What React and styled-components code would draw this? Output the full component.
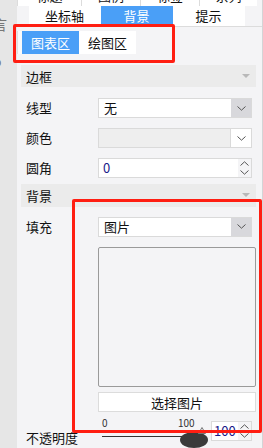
import React from 'react'
import styled, { createGlobalStyle } from 'styled-components'

const GlobalStyle = createGlobalStyle`
  html, body {
    margin: 0;
    padding: 0;
    background: #f4f4f6;
    font-family: "Noto Sans CJK SC", "Noto Sans", sans-serif;
    font-size: 13px;
    color: #111;
  }
`

const Page = styled.div`
  position: relative;
  display: flex;
  width: 263px;
  height: 448px;
  overflow: hidden;
`

const Strip = styled.div`
  width: 17px;
  flex: none;
  background: #e6e6e6;
  overflow: hidden;
  display: flex;
  flex-direction: column;
  padding-top: 15px;
  gap: 19px;
  color: #777;
  font-size: 14px;
`

const StripGlyph = styled.span`
  display: block;
  margin-left: -7px;
  line-height: 18px;
`

const Panel = styled.div`
  flex: 1;
  background: #f4f4f6;
  border-right: 1px solid #d4d4d6;
  display: flex;
  flex-direction: column;
`

const Edge = styled.div`
  width: 3px;
  flex: none;
  background: #f0f0f0;
`

const ClippedRow = styled.div`
  height: 6px;
  display: flex;
  align-items: flex-end;
  overflow: hidden;
  margin-right: 5px;
`

const TopTab = styled.div`
  height: 20px;
  flex: none;
  width: ${({ $w }) => $w}px;
  background: #fff;
  border-left: 1px solid #dcdcdc;
  display: flex;
  align-items: center;
  justify-content: center;
  font-size: 13px;
`

const TabRow = styled.div`
  height: 20px;
  display: flex;
  justify-content: center;
  border-bottom: 1px solid #dcdcdc;
  padding-right: 6px;
`

const Tab = styled.div`
  width: 72px;
  height: 20px;
  display: flex;
  align-items: center;
  justify-content: center;
  background: ${({ $active }) => ($active ? '#4a9ff7' : '#fff')};
  color: ${({ $active }) => ($active ? '#fff' : '#111')};
  font-size: 13px;
`

const SubTabs = styled.div`
  margin-top: 4px;
  align-self: flex-start;
  display: flex;
  background: #fafafa;
  border-left: 1px solid #e0e0e0;
  padding-left: 4px;
  height: 24px;
`

const SubTab = styled.div`
  width: 57px;
  display: flex;
  align-items: center;
  justify-content: center;
  background: ${({ $active }) => ($active ? '#4a9ff7' : '#fff')};
  color: ${({ $active }) => ($active ? '#fff' : '#111')};
  font-size: 13px;
`

const Section = styled.div`
  margin: ${({ $top }) => $top}px 6px 0 4px;
  height: 23px;
  background: #ebebeb;
  display: flex;
  align-items: center;
  justify-content: space-between;
  padding: 0 6px 0 5px;
  font-size: 13px;
`

const Caret = styled.span`
  width: 0;
  height: 0;
  border-left: 4px solid transparent;
  border-right: 4px solid transparent;
  border-top: 4px solid #b8b8b8;
`

const Row = styled.div`
  margin-top: ${({ $top }) => $top}px;
  display: flex;
  align-items: ${({ $align }) => $align || 'center'};
  padding-left: 9px;
`

const Label = styled.div`
  width: 72px;
  flex: none;
  font-size: 13px;
  line-height: 20px;
  margin-top: ${({ $top }) => $top || 0}px;
`

const Select = styled.div`
  width: 154px;
  height: 20px;
  box-sizing: border-box;
  border: 1px solid #dadada;
  background: ${({ $disabled }) => ($disabled ? '#eeeeee' : '#fff')};
  display: flex;
`

const SelectText = styled.div`
  flex: 1;
  padding-left: 5px;
  line-height: 18px;
  font-size: 13px;
`

const ArrowBox = styled.div`
  width: 20px;
  flex: none;
  display: flex;
  align-items: center;
  justify-content: center;
  background: ${({ $light }) => ($light ? '#fff' : '#d8d8dc')};
  border-left: ${({ $light }) => ($light ? '1px solid #dadada' : 'none')};
`

const SpinBox = styled.div`
  width: ${({ $w }) => $w}px;
  height: 20px;
  box-sizing: border-box;
  border: 1px solid #dadada;
  background: #fff;
  display: flex;
`

const SpinText = styled.div`
  flex: 1;
  padding-left: ${({ $pad }) => $pad ?? 4}px;
  line-height: 18px;
  font-size: 13px;
  color: #1a1a8a;
`

const SpinArrows = styled.div`
  width: 13px;
  flex: none;
  display: flex;
  flex-direction: column;
  align-items: center;
  justify-content: space-around;
  background: #f4f4f6;
`

const ImageBox = styled.div`
  margin: 10px 6px 0 81px;
  height: 143px;
  border: 1px solid #9a9a9a;
  border-radius: 2px;
  background: #f4f4f6;
`

const Button = styled.div`
  margin: 5px 6px 0 81px;
  height: 20px;
  box-sizing: border-box;
  border: 1px solid #dcdcdc;
  background: #fff;
  display: flex;
  align-items: center;
  justify-content: center;
  font-size: 13px;
`

const Slider = styled.div`
  position: relative;
  width: 107px;
  height: 19px;
  margin-left: 4px;
  margin-right: 2px;
`

const Tick = styled.span`
  position: absolute;
  top: -3px;
  left: ${({ $x }) => $x}px;
  font-size: 10px;
  color: #333;
  line-height: 10px;
`

const Track = styled.div`
  position: absolute;
  left: 0;
  right: 4px;
  top: 15px;
  height: 1px;
  background: #333;
`

const Thumb = styled.div`
  position: absolute;
  left: 78px;
  top: 11px;
  width: 28px;
  height: 16px;
  border-radius: 50%;
  background: #3a3a3a;
`

const ThumbMark = styled.svg`
  position: absolute;
  left: 96px;
  top: 6px;
`

const Highlight = styled.div`
  position: absolute;
  left: ${({ $x }) => $x}px;
  top: ${({ $y }) => $y}px;
  width: ${({ $w }) => $w}px;
  height: ${({ $h }) => $h}px;
  box-sizing: border-box;
  border: 3px solid #ff1e12;
  border-radius: 2px;
  pointer-events: none;
`

const Chevron = ({ up }) => (
  <svg width="9" height="5" viewBox="0 0 9 5">
    <path d={up ? 'M0.5 4.5 L4.5 0.8 L8.5 4.5' : 'M0.5 0.5 L4.5 4.2 L8.5 0.5'} fill="none" stroke="#555" strokeWidth="1" />
  </svg>
)

const Spinner = () => (
  <SpinArrows>
    <Chevron up />
    <Chevron />
  </SpinArrows>
)

export default function App() {
  return (
    <>
      <GlobalStyle />
      <Page>
        <Strip>
          <StripGlyph>言</StripGlyph>
          <StripGlyph>o</StripGlyph>
        </Strip>
        <Panel>
          <ClippedRow>
            <TopTab $w={63}>标题</TopTab>
            <TopTab $w={58}>图例</TopTab>
            <TopTab $w={58}>标签</TopTab>
            <TopTab $w={57}>系列</TopTab>
          </ClippedRow>
          <TabRow>
            <Tab>坐标轴</Tab>
            <Tab $active>背景</Tab>
            <Tab>提示</Tab>
          </TabRow>
          <SubTabs>
            <SubTab $active>图表区</SubTab>
            <SubTab>绘图区</SubTab>
          </SubTabs>
          <Section $top={11}>
            边框
            <Caret />
          </Section>
          <Row $top={11}>
            <Label>线型</Label>
            <Select>
              <SelectText>无</SelectText>
              <ArrowBox><Chevron /></ArrowBox>
            </Select>
          </Row>
          <Row $top={10}>
            <Label>颜色</Label>
            <Select $disabled>
              <SelectText />
              <ArrowBox $light><Chevron /></ArrowBox>
            </Select>
          </Row>
          <Row $top={10}>
            <Label>圆角</Label>
            <SpinBox $w={154}>
              <SpinText>0</SpinText>
              <Spinner />
            </SpinBox>
          </Row>
          <Section $top={6}>
            背景
            <Caret />
          </Section>
          <Row $top={10}>
            <Label>填充</Label>
            <Select>
              <SelectText>图片</SelectText>
              <ArrowBox><Chevron /></ArrowBox>
            </Select>
          </Row>
          <ImageBox />
          <Button>选择图片</Button>
          <Row $top={9} $align="flex-start">
            <Label $top={7}>不透明度</Label>
            <Slider>
              <Tick $x={0}>0</Tick>
              <Tick $x={76}>100</Tick>
              <Track />
              <Thumb />
              <ThumbMark width="8" height="7" viewBox="0 0 8 7">
                <path d="M4 0.5 L7.5 6.5 L0.5 6.5 Z" fill="#f4f4f6" stroke="#777" strokeWidth="1" />
              </ThumbMark>
            </Slider>
            <SpinBox $w={41}>
              <SpinText $pad={2}>100</SpinText>
              <Spinner />
            </SpinBox>
          </Row>
        </Panel>
        <Edge />
        <Highlight $x={13} $y={24} $w={162} $h={39} />
        <Highlight $x={72} $y={199} $w={190} $h={234} />
      </Page>
    </>
  )
}
